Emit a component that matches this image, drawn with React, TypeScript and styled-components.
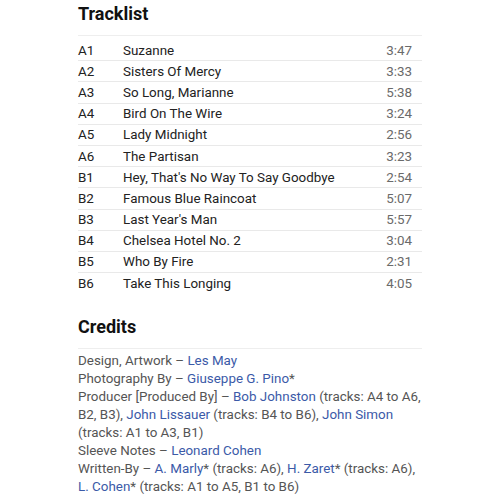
import React from 'react';
import { createGlobalStyle, styled } from 'styled-components';

const GlobalStyle = createGlobalStyle`
  body {
    margin: 0;
    background: #fff;
    font-family: Roboto, "Liberation Sans", sans-serif;
  }
`

const tracks = [
  ['A1', 'Suzanne', '3:47'],
  ['A2', 'Sisters Of Mercy', '3:33'],
  ['A3', 'So Long, Marianne', '5:38'],
  ['A4', 'Bird On The Wire', '3:24'],
  ['A5', 'Lady Midnight', '2:56'],
  ['A6', 'The Partisan', '3:23'],
  ['B1', "Hey, That's No Way To Say Goodbye", '2:54'],
  ['B2', 'Famous Blue Raincoat', '5:07'],
  ['B3', "Last Year's Man", '5:57'],
  ['B4', 'Chelsea Hotel No. 2', '3:04'],
  ['B5', 'Who By Fire', '2:31'],
  ['B6', 'Take This Longing', '4:05'],
]

const App = () => {
  return (
    <Page>
      <GlobalStyle />
      <Heading>Tracklist</Heading>
      <TrackTable>
        {tracks.map(([pos, title, dur]) => (
          <TrackRow key={pos}>
            <Pos>{pos}</Pos>
            <Title>{title}</Title>
            <Duration>{dur}</Duration>
          </TrackRow>
        ))}
      </TrackTable>

      <Heading $gap={20}>Credits</Heading>
      <CreditList>
        <li>Design, Artwork – <A>Les May</A></li>
        <li>Photography By – <A>Giuseppe G. Pino</A>*</li>
        <li>
          Producer [Produced By] – <A>Bob Johnston</A> (tracks: A4 to A6, B2, B3), <A>John Lissauer</A> (tracks: B4 to B6), <A>John Simon</A> (tracks: A1 to A3, B1)
        </li>
        <li>Sleeve Notes – <A>Leonard Cohen</A></li>
        <li>
          Written-By – <A>A. Marly</A>* (tracks: A6), <A>H. Zaret</A>* (tracks: A6), <A>L. Cohen</A>* (tracks: A1 to A5, B1 to B6)
        </li>
      </CreditList>
    </Page>
  );
};

export default App;

const Page = styled.div`
  width: 344px;
  margin-left: 78px;
`
const Heading = styled.h2<{ $gap?: number }>`
  margin: ${({ $gap }) => $gap || 0}px 0 7px;
  font-size: 18px;
  line-height: 28px;
  font-weight: 700;
  color: #111;
`
const TrackTable = styled.div`
  border-top: 1px solid #eeeeee;
  padding-top: 4px;
`
const TrackRow = styled.div`
  display: flex;
  align-items: center;
  height: 20.2px;
  font-size: 13.4px;
  color: #222;
  border-bottom: 1px solid #e9e9e9;
  &:last-child{
    border-bottom: none;
  }
`
const Pos = styled.div`
  width: 45px;
  flex: none;
`
const Title = styled.div`
  flex: 1;
`
const Duration = styled.div`
  padding-right: 10px;
  color: #6a6a6a;
`
const CreditList = styled.ul`
  list-style: none;
  margin: 0;
  padding: 3px 0 0;
  border-top: 1px solid #eeeeee;
  font-size: 13.4px;
  line-height: 18px;
  color: #555;
  li{
    margin: 0;
  }
`
const A = styled.a`
  color: #3b5aa8;
  cursor: pointer;
`
